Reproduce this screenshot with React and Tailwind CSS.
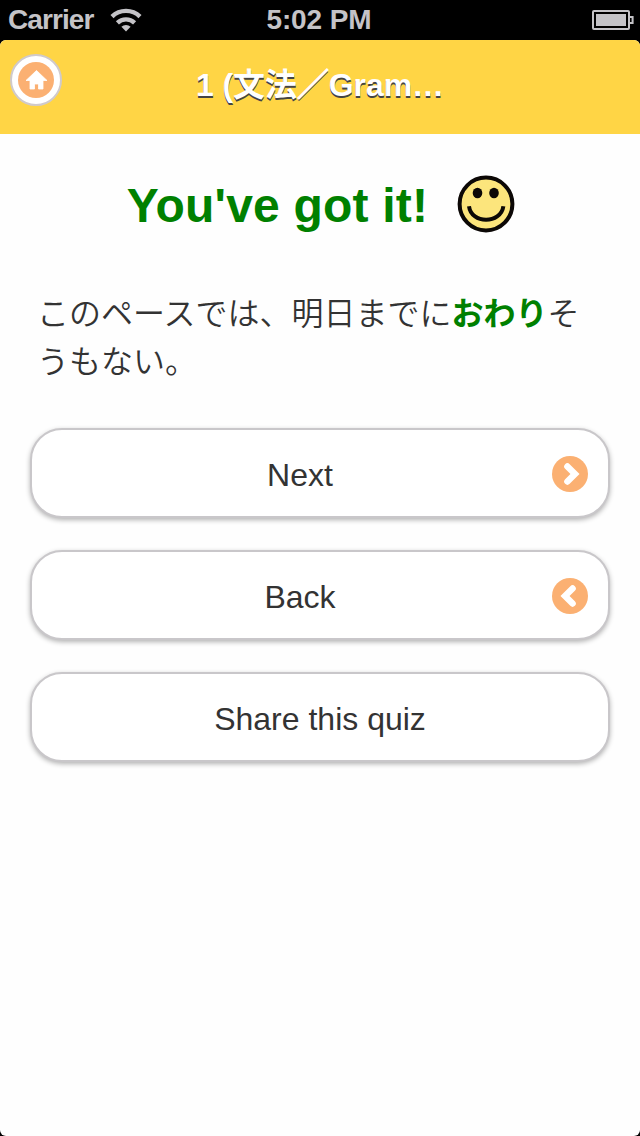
const WifiIcon = () => (
	<svg width="32" height="24" viewBox="0 0 32 24" fill="none" stroke="#c4c3c7" strokeWidth="4.4">
		<path d="M2 8.6a20 20 0 0 1 28 0" />
		<path d="M7.4 14.8a12.4 12.4 0 0 1 17.2 0" />
		<path d="M16 23.4l-4.6-4.6a6.6 6.6 0 0 1 9.2 0z" fill="#c4c3c7" stroke="none" />
	</svg>
);

const BatteryIcon = () => (
	<svg width="42" height="20" viewBox="0 0 42 20">
		<rect x="1" y="1" width="36" height="18" rx="1" fill="none" stroke="#c4c3c7" strokeWidth="2" />
		<rect x="4" y="4" width="30" height="12" fill="#c4c3c7" />
		<path d="M38 7h2.6v6H38" fill="none" stroke="#c4c3c7" strokeWidth="2" />
	</svg>
);

const HomeIcon = () => (
	<svg width="36" height="36" viewBox="0 0 36 36">
		<circle cx="18" cy="18" r="18" fill="#fbb072" />
		<path
			d="M18.5 8.5L8 18.5h4V27h4.5v-5h4v5H25v-8.5h4z"
			fill="#fff"
			stroke="#fff"
			strokeWidth="0.8"
			strokeLinejoin="round"
		/>
	</svg>
);

const ArrowIcon = ( { direction } ) => (
	<svg
		width="36"
		height="36"
		viewBox="0 0 36 36"
		className={ direction === 'left' ? 'rotate-180' : '' }
	>
		<circle cx="18" cy="18" r="18" fill="#fbb072" />
		<path d="M15.4 10.4l7.6 7.6-7.6 7.6" fill="none" stroke="#fff" strokeWidth="6.4" strokeLinecap="round" />
	</svg>
);

const SmileyIcon = () => (
	<svg width="58" height="58" viewBox="0 0 58 58">
		<circle cx="29" cy="29" r="26.4" fill="#fce57c" stroke="#0c0806" strokeWidth="4" />
		<ellipse cx="20.5" cy="18" rx="4.8" ry="5.2" fill="#0c0806" />
		<ellipse cx="37" cy="18" rx="4.8" ry="5.2" fill="#0c0806" />
		<path d="M12 31.2c2.4 18.2 31.6 18.2 34.4 0" fill="none" stroke="#0c0806" strokeWidth="4" />
	</svg>
);

const ListButton = ( { label, direction } ) => (
	<button className="flex h-[90px] w-full items-center rounded-[32px] border-2 border-[#c9c7ca] bg-white pt-0.5 pr-5 shadow-[0_2px_5px_rgba(0,0,0,0.3)]">
		<span className={ direction ? 'flex-1 pt-0.5 pl-4 text-center' : 'flex-1 pt-0.5 pl-5 text-center' }>
			{ label }
		</span>
		{ direction && <ArrowIcon direction={ direction } /> }
	</button>
);

const App = () => {
	return (
		<div className="min-h-[1136px] w-[640px] bg-black font-['Liberation_Sans','Noto_Sans_CJK_JP',sans-serif]">
			{/* Status bar */}
			<div className="grid h-10 grid-cols-3 items-center pr-1.5 pl-2 text-[28px] leading-10 font-bold text-[#c4c3c7]">
				<div className="flex items-center gap-4">
					<span className="tracking-[-0.9px]">Carrier</span>
					<WifiIcon />
				</div>
				<span className="pr-1 text-center tracking-[-0.1px]">5:02 PM</span>
				<div className="flex justify-end">
					<BatteryIcon />
				</div>
			</div>

			<div className="h-[1096px] overflow-hidden rounded-[6px] bg-[#fefefe]">
				<header className="grid h-[94px] grid-cols-[182px_1fr_182px] bg-[#ffd545]">
					<button className="mt-[14px] ml-[10px] flex size-[52px] items-center justify-center rounded-full border-2 border-[#d0cacb] bg-white">
						<HomeIcon />
					</button>
					<h1 className="self-center pb-[4px] text-center text-[32px] leading-10 font-bold tracking-[-0.1px] whitespace-nowrap text-white [text-shadow:0_2px_0_#444]">
						1 (文法
						<span className="[-webkit-text-stroke:1px_#fff]">／</span>
						Gram…
					</h1>
				</header>

				<main className="px-[30px] text-[32px] text-[#333]">
					<div className="mt-[41px] flex h-[58px] items-center justify-center gap-[29px] pl-0.5">
						<h2 className="pt-1 text-[48px] leading-[58px] font-bold tracking-[0.2px] text-[#008000]">
							{ "You've got it!" }
						</h2>
						<SmileyIcon />
					</div>

					<p className="mt-[57px] mb-[42px] pl-[7px] leading-[48px] font-[350]">
						このペースでは、明日までに
						<b className="font-bold text-[#008000]">おわり</b>
						そ
						<br />
						うもない。
					</p>

					<div className="flex flex-col gap-8">
						<ListButton label="Next" direction="right" />
						<ListButton label="Back" direction="left" />
						<ListButton label="Share this quiz" />
					</div>
				</main>
			</div>
		</div>
	);
};

export default App;
